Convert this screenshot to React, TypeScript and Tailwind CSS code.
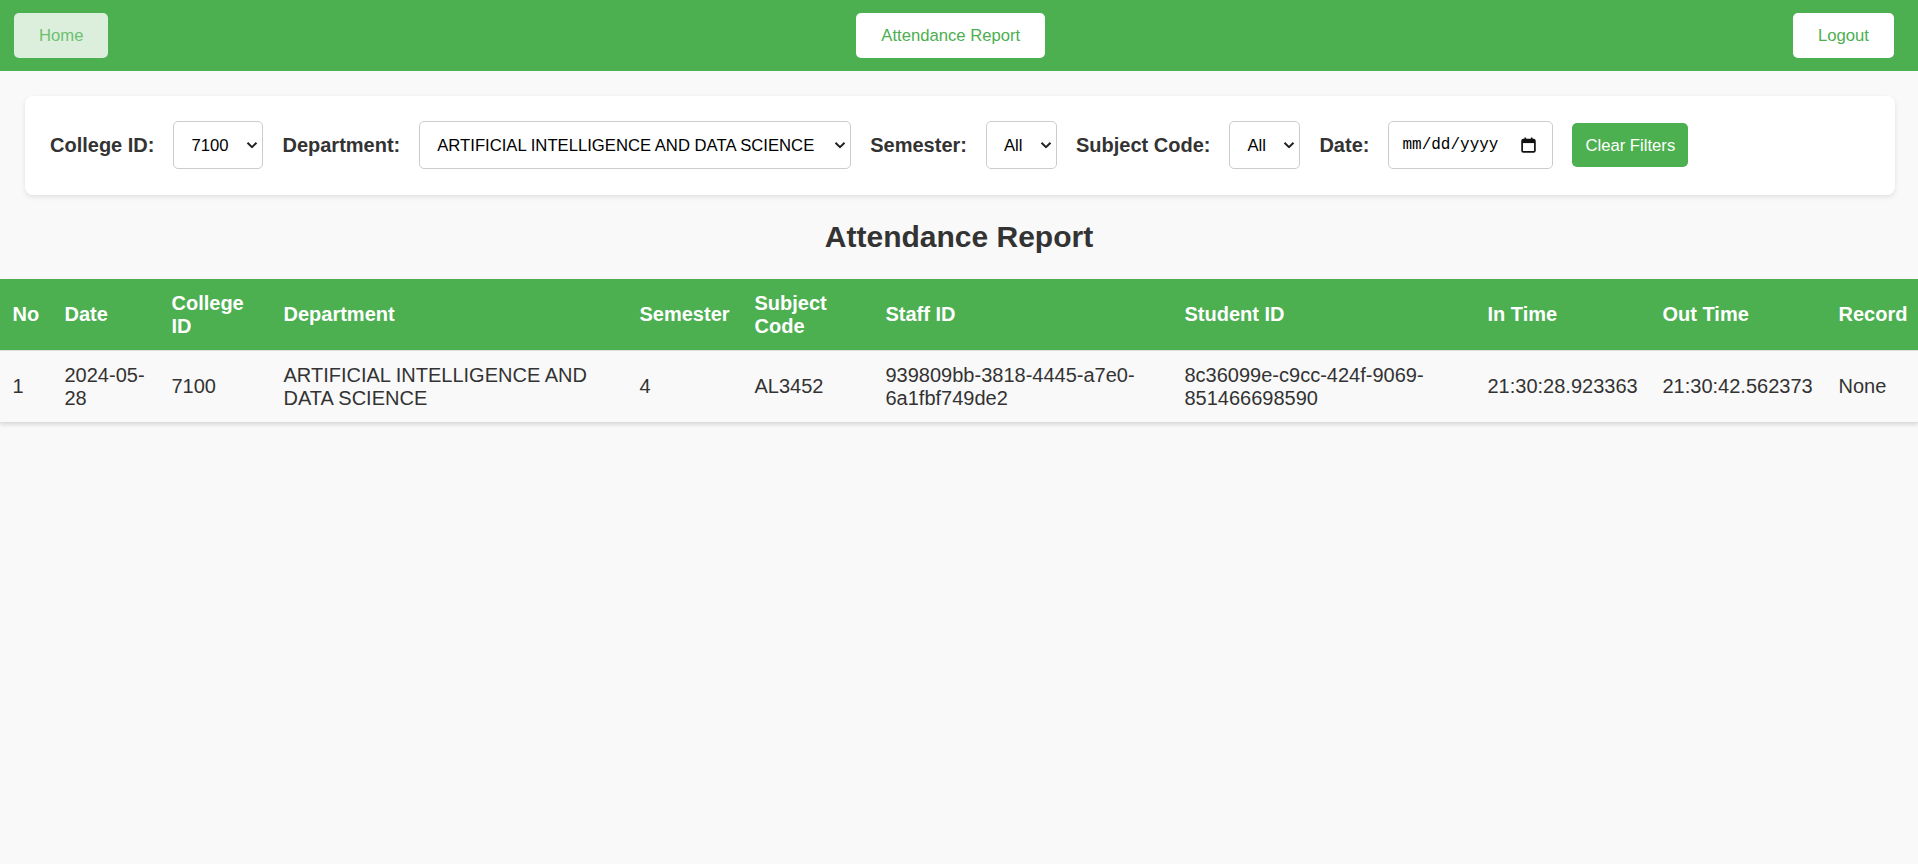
import { ChangeEvent, useState } from "react";

const departments = ["ARTIFICIAL INTELLIGENCE AND DATA SCIENCE"];

const columns = [
  { label: "No", width: 52 },
  { label: "Date", width: 107 },
  { label: "College ID", width: 112 },
  { label: "Department", width: 356 },
  { label: "Semester", width: 115 },
  { label: "Subject Code", width: 131 },
  { label: "Staff ID", width: 299 },
  { label: "Student ID", width: 303 },
  { label: "In Time", width: 175 },
  { label: "Out Time", width: 176 },
  { label: "Record", width: 92 },
];

const records = [
  {
    no: 1,
    date: "2024-05-28",
    collegeId: "7100",
    department: "ARTIFICIAL INTELLIGENCE AND DATA SCIENCE",
    semester: "4",
    subjectCode: "AL3452",
    staffId: "939809bb-3818-4445-a7e0-6a1fbf749de2",
    studentId: "8c36099e-c9cc-424f-9069-851466698590",
    inTime: "21:30:28.923363",
    outTime: "21:30:42.562373",
    record: "None",
  },
];

const Chevron = () => (
  <svg
    width="12"
    height="7"
    viewBox="0 0 12 7"
    className="pointer-events-none absolute right-[5px] top-1/2 -translate-y-1/2"
  >
    <path d="M1.5 1.2 L6 5.6 L10.5 1.2" fill="none" stroke="#222" strokeWidth="2" />
  </svg>
);

const CalendarIcon = () => (
  <svg width="15" height="16" viewBox="0 0 14 15">
    <rect x="1" y="2.5" width="12" height="11.5" rx="1.2" fill="none" stroke="#111" strokeWidth="1.6" />
    <rect x="1" y="2.5" width="12" height="3.2" fill="#111" />
    <rect x="3.2" y="0.5" width="1.6" height="3" fill="#111" />
    <rect x="9.2" y="0.5" width="1.6" height="3" fill="#111" />
  </svg>
);

type SelectProps = {
  value: string;
  options: string[];
  onChange: (e: ChangeEvent<HTMLSelectElement>) => void;
};

const FilterSelect = ({ value, options, onChange }: SelectProps) => (
  <div className="relative">
    <select
      value={value}
      onChange={onChange}
      className="h-[48px] appearance-none rounded-[5px] border border-[#ccc] bg-white pl-[17px] pr-[33px] text-[16.67px] text-black outline-none"
    >
      {options.map((o) => (
        <option key={o} value={o}>
          {o}
        </option>
      ))}
    </select>
    <Chevron />
  </div>
);

const Label = ({ children }: { children: string }) => (
  <span className="text-[20px] font-bold text-[#333]">{children}</span>
);

const App = () => {
  const [college, setCollege] = useState("7100");
  const [dept, setDept] = useState(departments[0]);
  const [semester, setSemester] = useState("All");
  const [subject, setSubject] = useState("All");

  const clearFilters = () => {
    setSemester("All");
    setSubject("All");
  };

  return (
    <div className="min-h-screen bg-[#f9f9f9] font-['Liberation_Sans',Arial,sans-serif]">
      <nav className="flex h-[71px] items-center justify-between bg-[#4caf50] pl-[14px] pr-[24px]">
        <button className="h-[45px] rounded-[5px] bg-[#dcefdc] px-[25px] text-[16.67px] text-[#6dbf70]">
          Home
        </button>
        <button className="h-[45px] rounded-[5px] bg-white px-[25px] text-[16.67px] text-[#4caf50]">
          Attendance Report
        </button>
        <button className="h-[45px] rounded-[5px] bg-white px-[25px] text-[16.67px] text-[#4caf50]">
          Logout
        </button>
      </nav>

      <div className="ml-[25px] mr-[23px] mt-[25px] flex items-center gap-[19px] rounded-[8px] bg-white pb-[26px] pl-[25px] pt-[25px] shadow-[0_2px_5px_rgba(0,0,0,0.1)]">
        <Label>College ID:</Label>
        <FilterSelect value={college} options={["7100"]} onChange={(e) => setCollege(e.target.value)} />
        <Label>Department:</Label>
        <FilterSelect value={dept} options={departments} onChange={(e) => setDept(e.target.value)} />
        <Label>Semester:</Label>
        <FilterSelect value={semester} options={["All"]} onChange={(e) => setSemester(e.target.value)} />
        <Label>Subject Code:</Label>
        <FilterSelect value={subject} options={["All"]} onChange={(e) => setSubject(e.target.value)} />
        <Label>Date:</Label>
        <div className="flex h-[48px] w-[165px] items-center justify-between rounded-[5px] border border-[#ccc] bg-white pl-[13px] pr-[16px]">
          <span className="font-['Liberation_Mono',monospace] text-[16px] text-black">mm/dd/yyyy</span>
          <CalendarIcon />
        </div>
        <button
          onClick={clearFilters}
          className="h-[44px] rounded-[5px] bg-[#4caf50] px-[13px] text-[16.67px] text-white"
        >
          Clear Filters
        </button>
      </div>

      <h2 className="mb-[25px] mt-[25px] text-center text-[30px] font-bold leading-[34px] text-[#333]">
        Attendance Report
      </h2>

      <table className="w-full table-fixed border-collapse shadow-[0_2px_4px_rgba(0,0,0,0.12)]">
        <colgroup>
          {columns.map((c) => (
            <col key={c.label} style={{ width: c.width }} />
          ))}
        </colgroup>
        <thead>
          <tr className="bg-[#4caf50]">
            {columns.map((c) => (
              <th
                key={c.label}
                className="border-b border-[#ddd] px-[12.5px] py-[12.5px] text-left align-middle text-[20px] font-bold leading-[23px] text-white"
              >
                {c.label}
              </th>
            ))}
          </tr>
        </thead>
        <tbody>
          {records.map((r) => (
            <tr key={r.no} className="text-[20px] leading-[23px] text-[#333]">
              {[
                r.no,
                r.date,
                r.collegeId,
                r.department,
                r.semester,
                r.subjectCode,
                r.staffId,
                r.studentId,
                r.inTime,
                r.outTime,
                r.record,
              ].map((v, i) => (
                <td key={i} className="border-b border-[#ddd] px-[12.5px] py-[12.5px] align-middle">
                  {v}
                </td>
              ))}
            </tr>
          ))}
        </tbody>
      </table>
    </div>
  );
};

export default App;
